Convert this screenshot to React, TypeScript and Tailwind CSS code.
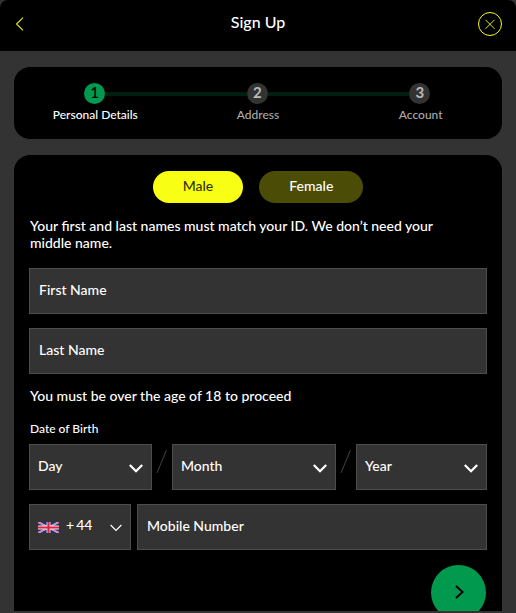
import React, { useState } from 'react';

const steps = ['Personal Details', 'Address', 'Account'];

const SelectChevron: React.FC = () => (
  <svg width="14" height="9" viewBox="0 0 14 9" fill="none" stroke="#fff" strokeWidth="2.3">
    <path d="M0.8 1 L7 7.2 L13.2 1" />
  </svg>
);

const DateSelect: React.FC<{ label: string; className: string }> = ({ label, className }) => (
  <button type="button" className={`flex h-[46px] items-center justify-between border border-[#4d4d4d] bg-[#333] pl-2 pr-2 ${className}`}>
    <span className="pb-[2px]">{label}</span>
    <span className="pt-[3px]"><SelectChevron /></span>
  </button>
);

const Slash: React.FC = () => (
  <svg className="mt-[5px]" width="20" height="26" viewBox="0 0 20 26" fill="none" stroke="#404040">
    <path d="M14.5 1 L5 24" />
  </svg>
);

const Flag: React.FC = () => (
  <svg width="21" height="11" viewBox="0 0 60 32" preserveAspectRatio="none">
    <rect width="60" height="32" fill="#1b2f7d" />
    <path d="M0 0 L60 32 M60 0 L0 32" stroke="#e6e0ea" strokeWidth="5.5" />
    <path d="M0 0 L60 32 M60 0 L0 32" stroke="#e4233f" strokeWidth="2" />
    <path d="M30 0 V32 M0 16 H60" stroke="#f3e9ee" strokeWidth="11" />
    <path d="M30 0 V32 M0 16 H60" stroke="#e4233f" strokeWidth="6.5" />
  </svg>
);

const SignUp: React.FC = () => {
  const [gender, setGender] = useState<string>('Male');

  return (
    <div className="h-[613px] w-[516px] overflow-hidden bg-[#333] font-['Lato',sans-serif] text-sm font-medium text-white">
      {/* Header */}
      <header className="flex h-[51px] items-center justify-between rounded-t-lg bg-black pl-[15px] pr-[14px]">
        <button type="button" className="w-6 pb-1">
          <svg width="9" height="14" viewBox="0 0 9 14" fill="none" stroke="#e6e619" strokeWidth="1.1">
            <path d="M8 0.6 L1.5 7 L8 13.4" />
          </svg>
        </button>
        <h1 className="pb-[7px] pr-px text-base">Sign Up</h1>
        <button type="button" className="pb-[3px]">
          <svg width="24" height="24" viewBox="0 0 24 24" fill="none" stroke="#f9ff14">
            <circle cx="12" cy="12" r="11.5" strokeWidth="1" />
            <path d="M7.5 7.8 L16.5 16.8 M16.5 7.8 L7.5 16.8" strokeWidth="0.9" />
          </svg>
        </button>
      </header>

      <main className="flex flex-col gap-4 px-[14px] pt-4">
        {/* Progress steps */}
        <ol className="grid h-[72px] grid-cols-3 rounded-2xl bg-black pt-4 text-xs">
          {steps.map((step, i) => (
            <li key={step} className={`flex flex-col items-center ${i === 0 ? '' : 'text-[#aaa]'}`}>
              <div className="flex w-full items-center pr-[1.5px]">
                <span className={`h-1 flex-1 ${i > 0 ? 'bg-[#001f10]' : ''}`} />
                <span className={`flex size-[21px] items-center justify-center rounded-full pb-[3px] text-[15px] leading-none ${i === 0 ? 'bg-[#00994d] text-black' : 'bg-[#333] font-bold text-[#bbb]'}`}>
                  {i + 1}
                </span>
                <span className={`-mr-[1.5px] h-1 grow basis-[1.5px] ${i < 2 ? 'bg-[#001f10]' : ''}`} />
              </div>
              <span className="mt-[3px] leading-4">{step}</span>
            </li>
          ))}
        </ol>

        {/* Details form */}
        <form className="h-[456px] overflow-hidden rounded-t-2xl bg-black px-[15px] pt-4">
          <div className="flex h-8 justify-center gap-4">
            {['Male', 'Female'].map((g) => (
              <button
                key={g}
                type="button"
                onClick={() => setGender(g)}
                className={`rounded-full px-[30px] pb-[2px] ${gender === g ? 'bg-[#f9ff14] text-[#333300]' : 'bg-[#4b4d06] text-white'}`}
              >
                {g}
              </button>
            ))}
          </div>

          <p className="mt-[14px] w-[430px] pl-px leading-[17px]">
            Your first and last names must match your ID. We don’t need your middle name.
          </p>

          <input className="mt-[17px] block h-[46px] w-full border border-[#4d4d4d] bg-[#333] px-[9px] pb-1 placeholder:text-white" placeholder="First Name" />
          <input className="mt-[14px] block h-[46px] w-full border border-[#4d4d4d] bg-[#333] px-[9px] pb-1 placeholder:text-white" placeholder="Last Name" />

          <p className="mt-[13px] pl-px leading-[18px]">You must be over the age of 18 to proceed</p>
          <p className="mt-[15px] h-[24px] pl-px text-[12px] leading-[18px]">Date of Birth</p>

          <div className="flex">
            <DateSelect label="Day" className="w-[123px]" />
            <Slash />
            <DateSelect label="Month" className="w-[164px]" />
            <Slash />
            <DateSelect label="Year" className="w-[131px]" />
          </div>

          <div className="mt-[14px] flex gap-[6px]">
            <button type="button" className="flex h-[46px] w-[102px] items-center border border-[#4d4d4d] bg-[#333] pl-2">
              <Flag />
              <span className="ml-[7px] flex w-[44px] gap-[2px] pb-1">
                <span>+</span>
                <span>44</span>
              </span>
              <svg className="mt-px" width="12" height="8" viewBox="0 0 12 8" fill="none" stroke="#fff" strokeWidth="1.2">
                <path d="M0.6 1 L6 6.5 L11.4 1" />
              </svg>
            </button>
            <input className="h-[46px] flex-1 border border-[#4d4d4d] bg-[#333] px-[9px] pb-1 placeholder:text-white" placeholder="Mobile Number" />
          </div>

          <button type="button" className="mt-[15px] mr-px ml-auto flex size-[55px] items-center justify-center rounded-full bg-[#00994d]">
            <svg className="mb-[2px] ml-[2px]" width="9" height="14" viewBox="0 0 9 14" fill="none" stroke="#000" strokeWidth="2">
              <path d="M1 1 L7.5 7 L1 13" />
            </svg>
          </button>
        </form>
      </main>
    </div>
  );
};

export default SignUp;
